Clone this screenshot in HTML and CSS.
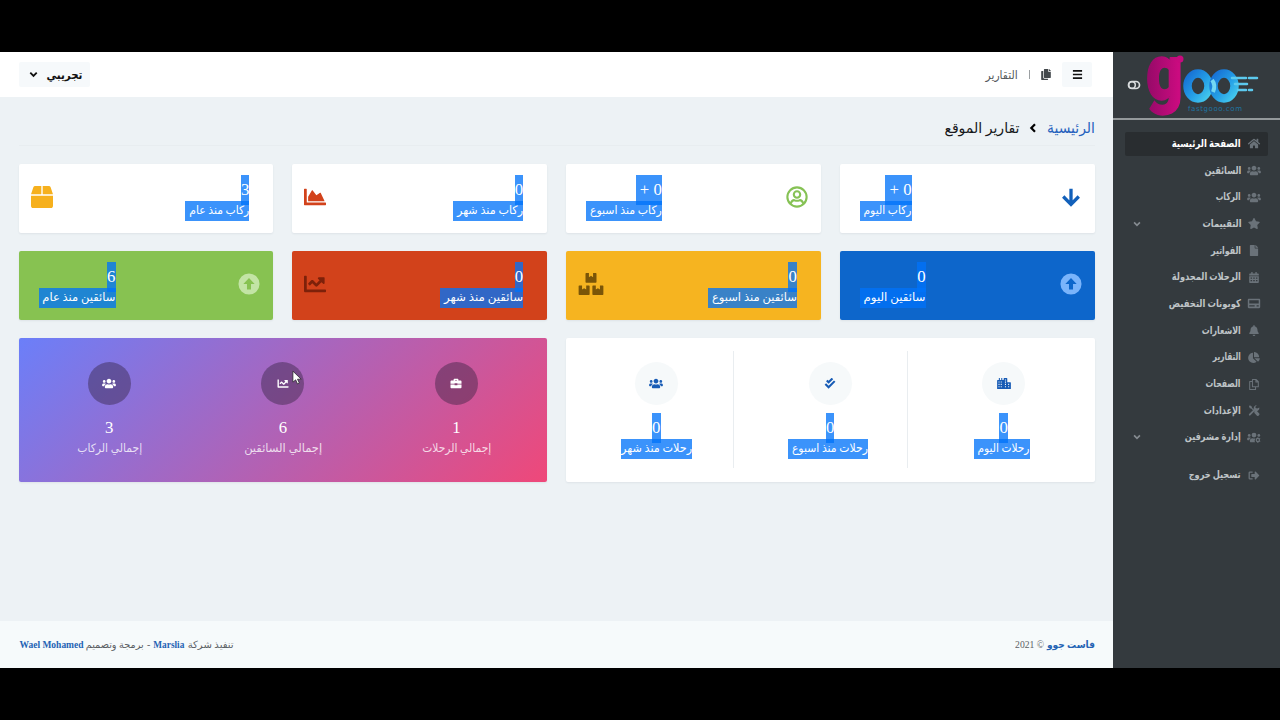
FILE: index.html
```html
<!DOCTYPE html>
<html lang="ar" dir="rtl">
<head>
<meta charset="utf-8">
<title>تقارير الموقع</title>
<link rel="stylesheet" href="styles.css">
</head>
<body>
<svg class="sprite" aria-hidden="true">
  <symbol id="users" viewBox="0 0 640 512"><path d="M96 224c35.3 0 64-28.7 64-64s-28.7-64-64-64-64 28.7-64 64 28.7 64 64 64zm448 0c35.3 0 64-28.7 64-64s-28.7-64-64-64-64 28.7-64 64 28.7 64 64 64zm32 32h-64c-17.6 0-33.5 7.1-45.1 18.6 40.3 22.1 68.9 62 75.1 109.4h66c17.7 0 32-14.3 32-32v-32c0-35.3-28.7-64-64-64zm-256 0c61.9 0 112-50.1 112-112S381.9 32 320 32 208 82.1 208 144s50.1 112 112 112zm76.8 32h-8.3c-20.8 10-43.9 16-68.5 16s-47.6-6-68.5-16h-8.3C179.6 288 128 339.6 128 403.2V432c0 26.5 21.5 48 48 48h288c26.5 0 48-21.5 48-48v-28.8c0-63.6-51.6-115.2-115.2-115.2zm-223.7-13.4C161.5 263.1 145.6 256 128 256H64c-35.3 0-64 28.7-64 64v32c0 17.7 14.3 32 32 32h65.9c6.3-47.4 34.9-87.3 75.2-109.4z"/></symbol>
  <symbol id="users-cog" viewBox="0 0 640 512"><circle cx="96" cy="160" r="64"/><circle cx="320" cy="144" r="112"/><circle cx="544" cy="160" r="64"/><path d="M173 275c-12-12-27-19-45-19H64c-35 0-64 29-64 64v32c0 18 14 32 32 32h66c6-47 35-87 75-109zM128 403c0-64 52-115 115-115h9c43 21 94 21 137 0l-20 60c-30 40-20 90 10 132H176c-27 0-48-21-48-48z"/><circle cx="500" cy="372" r="74" fill="none" stroke="currentColor" stroke-width="62"/><path d="M478 240h44v44h-44zM478 460h44v48h-44zM590 280l32 38-38 26-26-36zM590 464l32-38-38-26-26 36z"/></symbol>
  <symbol id="star" viewBox="0 0 576 512"><path d="M259.3 17.8L194 150.2 47.9 171.5c-26.2 3.8-36.7 36.1-17.7 54.6l105.7 103-25 145.5c-4.5 26.3 23.2 46 46.4 33.7L288 439.6l130.7 68.7c23.2 12.2 50.9-7.4 46.4-33.7l-25-145.5 105.7-103c19-18.5 8.5-50.8-17.7-54.6L382 150.2 316.7 17.8c-11.7-23.6-45.6-23.9-57.4 0z"/></symbol>
  <symbol id="file" viewBox="0 0 384 512"><path d="M224 136V0H24C10.7 0 0 10.7 0 24v464c0 13.3 10.7 24 24 24h336c13.3 0 24-10.7 24-24V160H248c-13.2 0-24-10.8-24-24zm160-14.1v6.1H256V0h6.1c6.4 0 12.5 2.5 17 7l97.9 98c4.5 4.5 7 10.6 7 16.9z"/></symbol>
  <symbol id="home" viewBox="0 0 576 512"><path d="M280.37 148.26L96 300.11V464a16 16 0 0 0 16 16l112.06-.29a16 16 0 0 0 15.92-16V368a16 16 0 0 1 16-16h64a16 16 0 0 1 16 16v95.64a16 16 0 0 0 16 16.05L464 480a16 16 0 0 0 16-16V300L295.67 148.26a12.19 12.19 0 0 0-15.3 0zM571.6 251.47L488 182.56V44.05a12 12 0 0 0-12-12h-56a12 12 0 0 0-12 12v72.61L318.47 43a48 48 0 0 0-61 0L4.34 251.47a12 12 0 0 0-1.6 16.9l25.5 31A12 12 0 0 0 45.15 301l235.22-193.74a12.19 12.19 0 0 1 15.3 0L530.9 301a12 12 0 0 0 16.9-1.6l25.5-31a12 12 0 0 0-1.7-16.93z"/></symbol>
  <symbol id="calendar" viewBox="0 0 448 512"><path fill-rule="evenodd" d="M0 192v272c0 27 21 48 48 48h352c27 0 48-21 48-48V192zm64 60h70v60H64zm125 0h70v60h-70zm125 0h70v60h-70zM64 376h70v60H64zm125 0h70v60h-70zm125 0h70v60h-70zM448 160v-48c0-27-21-48-48-48h-48V12c0-7-5-12-12-12h-40c-7 0-12 5-12 12v52H160V12c0-7-5-12-12-12h-40c-7 0-12 5-12 12v52H48c-27 0-48 21-48 48v48z"/></symbol>
  <symbol id="card" viewBox="0 0 576 512"><path fill-rule="evenodd" d="M48 40h480c27 0 48 21 48 48v336c0 27-21 48-48 48H48c-27 0-48-21-48-48V88c0-27 21-48 48-48zm20 70v150h440V110zm0 230v56h250v-56zm340 0v56h100v-56z"/></symbol>
  <symbol id="bell" viewBox="0 0 448 512"><path d="M224 512c35.32 0 63.97-28.65 63.97-64H160.03c0 35.35 28.65 64 63.97 64zm215.39-149.71c-19.32-20.76-55.47-51.99-55.47-154.29 0-77.7-54.48-139.9-127.94-155.16V32c0-17.67-14.32-32-31.98-32s-31.98 14.33-31.98 32v20.84C118.56 68.1 64.08 130.3 64.08 208c0 102.3-36.15 133.53-55.47 154.29-6 6.45-8.66 14.16-8.61 21.71.11 16.4 12.98 32 32.1 32h383.8c19.12 0 32-15.6 32.1-32 .05-7.55-2.61-15.27-8.61-21.71z"/></symbol>
  <symbol id="pie" viewBox="0 0 544 512"><path d="M527.79 288H290.5l158.03 158.03c6.04 6.04 15.98 6.53 22.19.68 38.7-36.46 65.32-85.61 73.13-140.86 1.34-9.46-6.51-17.85-16.06-17.85zm-15.83-64.8C503.72 103.74 408.26 8.28 288.8.04 279.68-.59 272 7.1 272 16.24V240h223.77c9.14 0 16.82-7.68 16.19-16.8zM224 288V50.71c0-9.55-8.39-17.4-17.84-16.06C86.99 51.49-4.1 155.6.14 280.37 4.5 408.51 114.83 513.59 243.03 511.98c50.4-.63 96.97-16.87 135.26-44.03 7.9-5.6 8.42-17.23 1.57-24.08L224 288z"/></symbol>
  <symbol id="pages" viewBox="0 0 448 512"><path d="M152 24h176l96 96v240H152zM312 30v104h104M152 120H24v368h272V370" fill="none" stroke="currentColor" stroke-width="48" stroke-linejoin="round"/></symbol>
  <symbol id="copy" viewBox="0 0 448 512"><path d="M320 448v40c0 13-11 24-24 24H24c-13 0-24-11-24-24V120c0-13 11-24 24-24h72v296c0 31 25 56 56 56zm0-344V0H152c-13 0-24 11-24 24v368c0 13 11 24 24 24h272c13 0 24-11 24-24V128H344c-13 0-24-11-24-24zm121-31L375 7c-5-5-11-7-17-7h-6v96h96v-6c0-6-3-12-7-17z"/></symbol>
  <symbol id="tools" viewBox="0 0 512 512"><path d="M70 70l120 120 110 110" fill="none" stroke="currentColor" stroke-width="52"/><path d="M20 60l45-45 85 55 10 60-38 38-58-14zM300 270l60-20 140 140c16 16 16 46 0 70l-35 35c-20 18-50 18-70 0L265 365z"/><path d="M60 450L330 180" fill="none" stroke="currentColor" stroke-width="86" stroke-linecap="round"/><path d="M502 120c14 60-16 130-86 156-36 12-80 10-112-8l-66-62c-12-90 40-200 150-204l-66 76 10 70 70 12z"/></symbol>
  <symbol id="logout" viewBox="0 0 512 512"><path d="M497 273L329 441c-15 15-41 4.500-41-17v-96H152c-13 0-24-11-24-24v-96c0-13 11-24 24-24h136V88c0-21 26-32 41-17l168 168c9 9 9 25 0 34z"/><path d="M192 96H64c-18 0-32 14-32 32v256c0 18 14 32 32 32h128" fill="none" stroke="currentColor" stroke-width="60"/></symbol>
  <symbol id="chevron" viewBox="0 0 12 12"><path d="M2.500 4L6 7.500 9.500 4" fill="none" stroke="currentColor" stroke-width="2"/></symbol>
  <symbol id="chevron-left" viewBox="0 0 12 12"><path d="M8 2.200L4.300 6 8 9.800" fill="none" stroke="currentColor" stroke-width="2.200"/></symbol>
  <symbol id="bars" viewBox="0 0 12 12"><path d="M1 2h10M1 6h10M1 10h10" fill="none" stroke="currentColor" stroke-width="1.800"/></symbol>
  <symbol id="toggle" viewBox="0 0 14 10"><rect x="1.500" y="1.500" width="11" height="7" rx="3.500" fill="none" stroke="currentColor" stroke-width="1.700"/><circle cx="5" cy="5" r="3.300" fill="none" stroke="currentColor" stroke-width="1.500"/></symbol>
  <symbol id="arrow-down" viewBox="0 0 24 24"><path d="M12 3v16M3.500 11.500l8.500 8.500 8.500-8.500" fill="none" stroke="currentColor" stroke-width="3.600"/></symbol>
  <symbol id="user-circle" viewBox="0 0 24 24"><g fill="none" stroke="currentColor" stroke-width="2.300"><circle cx="12" cy="12" r="10.500"/><circle cx="12" cy="9.300" r="3.500"/><path d="M5 19.200c1.500-3.500 3.500-4 4.800-3.500 1.400.5 3 .5 4.400 0 1.300-.5 3.300 0 4.800 3.500"/></g></symbol>
  <symbol id="area" viewBox="0 0 512 512"><path d="M500 384c6.600 0 12 5.400 12 12v40c0 6.600-5.400 12-12 12H12c-6.600 0-12-5.400-12-12V76c0-6.600 5.400-12 12-12h40c6.600 0 12 5.400 12 12v308h436zM372.700 159.500L288 216l-85.300-113.700c-5.100-6.800-15.500-6.300-19.900 1L96 248v104h384l-89.900-187.800c-3.200-6.500-11.400-8.700-17.400-4.700z"/></symbol>
  <symbol id="line" viewBox="0 0 512 512"><path d="M496 384H64V80c0-8.840-7.160-16-16-16H16C7.160 64 0 71.160 0 80v336c0 17.670 14.330 32 32 32h464c8.840 0 16-7.160 16-16v-32c0-8.840-7.160-16-16-16zM464 96H345.940c-21.380 0-32.090 25.850-16.970 40.970l32.400 32.400L288 242.750l-73.370-73.370c-12.500-12.500-32.760-12.500-45.250 0l-68.690 68.690c-6.250 6.250-6.250 16.380 0 22.630l22.620 22.620c6.250 6.250 16.380 6.250 22.630 0L192 237.250l73.370 73.370c12.500 12.500 32.760 12.500 45.250 0l96-96 32.400 32.400c15.120 15.120 40.970 4.410 40.970-16.970V112c.010-8.840-7.150-16-15.990-16z"/></symbol>
  <symbol id="box" viewBox="0 0 512 512"><path d="M509.500 184.600L458.900 32.800C452.400 13.200 434.100 0 413.400 0H272v192h238.700c-.4-2.500-.4-5-1.200-7.400zM240 0H98.600c-20.700 0-39 13.200-45.500 32.800L2.500 184.600c-.8 2.400-.8 4.900-1.200 7.400H240V0zM0 224v240c0 26.500 21.500 48 48 48h416c26.500 0 48-21.500 48-48V224H0z"/></symbol>
  <symbol id="boxes" viewBox="0 0 576 512"><path id="crate" d="M160 16c0-9 7-16 16-16h64v96l48-32 48 32V0h64c9 0 16 7 16 16v192c0 9-7 16-16 16H176c-9 0-16-7-16-16z"/><use href="#crate" transform="translate(-160 288)"/><use href="#crate" transform="translate(160 288)"/></symbol>
  <symbol id="arrow-circle" viewBox="0 0 24 24"><path fill-rule="evenodd" d="M12 .5a11.500 11.500 0 1 1 0 23 11.500 11.500 0 0 1 0-23zm0 5L5.800 12H9.800v6h4.400v-6h4z"/></symbol>
  <symbol id="briefcase" viewBox="0 0 512 512"><path fill-rule="evenodd" d="M144 112V80c0-27 21-48 48-48h128c27 0 48 21 48 48v32h96c27 0 48 21 48 48v112H320v-24H192v24H0V160c0-27 21-48 48-48zm64-16v16h96V96zM0 304h192v30h128v-30h192v128c0 27-21 48-48 48H48c-27 0-48-21-48-48z"/></symbol>
  <symbol id="checks" viewBox="0 0 512 512"><path d="M105 115l85 85L370 20M40 280l150 150L475 145" fill="none" stroke="currentColor" stroke-width="96"/></symbol>
  <symbol id="city" viewBox="0 0 640 512"><path fill-rule="evenodd" d="M80 0h48v96h64V0h48v96h64V24c0-13 11-24 24-24h120c13 0 24 11 24 24v168h144c13 0 24 11 24 24v296H0V120c0-13 11-24 24-24h56zM64 160v48h48v-48zm104 0v48h48v-48zM64 272v48h48v-48zm104 0v48h48v-48zM64 384v48h48v-48zm104 0v48h48v-48zM364 64v48h48V64zm0 104v48h48v-48zm0 104v48h48v-48zm0 112v48h48v-48zm148-112v48h48v-48zm0 112v48h48v-48z"/></symbol>
  <linearGradient id="pink" x1="0" x2="1"><stop offset="0" stop-color="#940a67"/><stop offset="1" stop-color="#d20b83"/></linearGradient>
  <linearGradient id="sky" x1="0" y1="0" x2="1" y2="1"><stop offset="0" stop-color="#176fd4"/><stop offset=".55" stop-color="#249ee6"/><stop offset="1" stop-color="#46cbed"/></linearGradient>
</svg>

<div class="app">
  <aside class="sidebar">
    <div class="brand" dir="ltr">
      <svg class="toggle"><use href="#toggle"/></svg>
      <svg class="logo" viewBox="0 0 114 64">
        <text class="logo-g" x="-1" y="46" textLength="37" lengthAdjust="spacingAndGlyphs">g</text>
        <circle cx="33" cy="6" r="3.500" fill="#c70b7e"/>
        <ellipse cx="51" cy="33" rx="10.500" ry="12.500" fill="none" stroke="url(#sky)" stroke-width="8.500"/>
        <ellipse cx="77" cy="33" rx="10.500" ry="12.500" fill="none" stroke="url(#sky)" stroke-width="8.500"/>
        <path d="M65 27q4 5 1 12" fill="none" stroke="#73d7f3" stroke-width="4"/>
        <path d="M85 25h14M102 25h8M88 31h12M91 37h8M102 37h3" stroke="#5cc9ee" stroke-width="2.500" stroke-linecap="round"/>
        <text class="logo-url" x="41" y="58" textLength="54">fastgooo.com</text>
      </svg>
    </div>
    <nav class="menu">
      <a class="item active"><svg><use href="#home"/></svg><span data-w="69">الصفحة الرئيسية</span></a>
      <a class="item"><svg><use href="#users"/></svg><span data-w="37">السائقين</span></a>
      <a class="item"><svg><use href="#users"/></svg><span data-w="25">الركاب</span></a>
      <a class="item"><svg><use href="#star"/></svg><span data-w="39">التقييمات</span><svg class="caret"><use href="#chevron"/></svg></a>
      <a class="item"><svg><use href="#file"/></svg><span data-w="30">الفواتير</span></a>
      <a class="item"><svg><use href="#calendar"/></svg><span data-w="69">الرحلات المجدولة</span></a>
      <a class="item"><svg><use href="#card"/></svg><span data-w="72">كوبونات التخفيض</span></a>
      <a class="item"><svg><use href="#bell"/></svg><span data-w="39">الاشعارات</span></a>
      <a class="item"><svg><use href="#pie"/></svg><span data-w="28">التقارير</span></a>
      <a class="item"><svg><use href="#pages"/></svg><span data-w="35">الصفحات</span></a>
      <a class="item"><svg><use href="#tools"/></svg><span data-w="37">الإعدادات</span></a>
      <a class="item"><svg><use href="#users-cog"/></svg><span data-w="56">إدارة مشرفين</span><svg class="caret"><use href="#chevron"/></svg></a>
      <a class="item logout"><svg><use href="#logout"/></svg><span data-w="52">تسجيل خروج</span></a>
    </nav>
  </aside>

  <main class="main">
    <header class="topbar">
      <div class="tools">
        <button class="btn square"><svg><use href="#bars"/></svg></button>
        <svg class="copy"><use href="#copy"/></svg>
        <i class="sep"></i>
        <span data-w="32">التقارير</span>
      </div>
      <button class="btn user"><span data-w="36">تجريبي</span><svg><use href="#chevron"/></svg></button>
    </header>

    <div class="content">
      <div class="crumbs">
        <a data-w="48">الرئيسية</a>
        <svg><use href="#chevron-left"/></svg>
        <span data-w="75">تقارير الموقع</span>
      </div>

      <section class="cards">
        <article class="card icon-first"><svg class="blue-ink"><use href="#arrow-down"/></svg><div class="stat sel"><b>0 +&nbsp;</b><p><span data-w="48">ركاب اليوم</span></p></div></article>
        <article class="card icon-first"><svg class="green-ink"><use href="#user-circle"/></svg><div class="stat sel"><b>0 +&nbsp;</b><p><span data-w="72">ركاب منذ اسبوع</span></p></div></article>
        <article class="card"><div class="stat sel"><b>0</b><p><span data-w="66">ركاب منذ شهر</span></p></div><svg class="red-ink"><use href="#area"/></svg></article>
        <article class="card"><div class="stat sel"><b>3</b><p><span data-w="60">ركاب منذ عام</span></p></div><svg class="amber-ink"><use href="#box"/></svg></article>

        <article class="card icon-first blue"><svg><use href="#arrow-circle"/></svg><div class="stat sel"><b>0</b><p><span data-w="62">سائقين اليوم</span></p></div></article>
        <article class="card amber"><div class="stat sel"><b>0</b><p><span data-w="85">سائقين منذ اسبوع</span></p></div><svg class="wide"><use href="#boxes"/></svg></article>
        <article class="card red"><div class="stat sel"><b>0</b><p><span data-w="79">سائقين منذ شهر</span></p></div><svg><use href="#line"/></svg></article>
        <article class="card icon-first green"><svg><use href="#arrow-circle"/></svg><div class="stat sel"><b>6</b><p><span data-w="73">سائقين منذ عام</span></p></div></article>

        <article class="panel trips">
          <div class="col"><i class="disc"><svg><use href="#city"/></svg></i><div class="stat sel"><b>0</b><p class="trail"><span data-w="52">رحلات اليوم</span></p></div></div>
          <div class="col"><i class="disc"><svg><use href="#checks"/></svg></i><div class="stat sel"><b>0</b><p class="trail"><span data-w="76">رحلات منذ اسبوع</span></p></div></div>
          <div class="col"><i class="disc"><svg><use href="#users"/></svg></i><div class="stat sel"><b>0</b><p class="flush"><span data-w="71">رحلات منذ شهر</span></p></div></div>
        </article>
        <article class="panel totals">
          <div class="col"><i class="disc"><svg><use href="#briefcase"/></svg></i><div class="stat"><b>1</b><p><span data-w="69">إجمالي الرحلات</span></p></div></div>
          <div class="col"><i class="disc"><svg><use href="#line"/></svg></i><div class="stat"><b>6</b><p><span data-w="78">إجمالي السائقين</span></p></div></div>
          <div class="col"><i class="disc"><svg><use href="#users"/></svg></i><div class="stat"><b>3</b><p><span data-w="65">إجمالي الركاب</span></p></div></div>
          <svg class="pointer" viewBox="0 0 12 17"><path d="M1 1v12l3-2.500 2 4.500 2-1-2-4.200h4z" fill="#fff" stroke="#222" stroke-width=".8"/></svg>
        </article>
      </section>
    </div>

    <footer class="footer">
      <div class="credit"><a data-w="48">فاست جوو</a><span data-w="29">© 2021</span></div>
      <div class="credit"><span data-w="46">تنفيذ شركة</span><a data-w="31">Marslia</a><span>-</span><span data-w="58">برمجة وتصميم</span><a data-w="64">Wael Mohamed</a></div>
    </footer>
  </main>
</div>
<script src="fit.js"></script>
</body>
</html>
```
FILE: styles.css
```css
* { box-sizing: border-box; }
body {
  margin: 0;
  height: 720px;
  padding: 52px 0;
  overflow: hidden;
  background: #000;
  font-family: "Liberation Serif", "DejaVu Sans", sans-serif;
  font-size: 11.5px;
  color: #16181a;
}
svg { display: block; fill: currentColor; flex: none; overflow: visible; }
.sprite { position: absolute; width: 0; height: 0; }
p { margin: 0; }
i { display: block; }
[data-w] { display: inline-block; white-space: nowrap; flex: none; }
.fit-inner { display: inline-block; transform-origin: right center; }

.app { display: flex; height: 616px; background: #edf2f5; }

.sidebar { width: 167px; background: #343a3e; color: #bfc4c7; flex: none; }
.brand {
  display: flex;
  align-items: center;
  gap: 6px;
  height: 68px;
  padding-left: 14px;
  border-bottom: 2px solid #94999b;
}
.toggle { width: 14px; height: 10px; color: #d9dcde; }
.logo { width: 114px; height: 64px; }
.logo-g { font: 900 77px Roboto, sans-serif; fill: url(#pink); stroke: url(#pink); stroke-width: 1.500px; }
.logo-url { font: 7px "DejaVu Sans", sans-serif; fill: #1f75a2; }
.menu { padding: 12px 12px 0; }
.item {
  display: flex;
  align-items: center;
  gap: 6px;
  height: 23.700px;
  margin-bottom: 3px;
  padding: 0 7px;
  border-radius: 2px;
  font-size: 10.500px;
  font-weight: 700;
  line-height: 20px;
}
.item svg { width: 14px; height: 11px; color: #6a7279; }
.item svg.caret { width: 10px; height: 10px; margin-right: auto; color: #858b90; }
.item.active { background: #292d30; color: #fff; }
.item.logout { margin-top: 14px; }

.main { display: flex; flex-direction: column; flex: 1; min-width: 0; }
.topbar {
  display: flex;
  align-items: center;
  justify-content: space-between;
  height: 45px;
  padding: 0 21px 0 19px;
  background: #fff;
  color: #55595c;
}
.tools { display: flex; align-items: center; }
.tools .copy { width: 10px; height: 11px; margin: 0 11px 0 11px; color: #43484c; }
.sep { width: 1px; height: 9px; margin-left: 11px; background: #9b9fa2; }
.btn {
  display: flex;
  align-items: center;
  height: 25px;
  border: 0;
  border-radius: 2px;
  background: #f6f9fb;
  color: #111;
  font: 700 11.500px "Liberation Serif", "DejaVu Sans", sans-serif;
}
.square { justify-content: center; width: 30px; padding: 0; }
.square svg { width: 11px; height: 11px; }
.user { width: 71px; padding: 0 8px; gap: 7px; }
.user svg { width: 11px; height: 11px; }

.content { flex: 1; padding: 13px 18.500px 0 18.500px; }
.crumbs {
  display: flex;
  align-items: center;
  height: 36px;
  border-bottom: 1px solid #e8edf0;
  font-size: 14.500px;
  line-height: 24px;
}
.crumbs a { color: #2561bd; }
.crumbs svg { width: 12px; height: 12px; margin: 0 8px 0 7px; color: #000; }

.cards {
  display: grid;
  grid-template-columns: repeat(4, 1fr);
  grid-template-rows: 69px 69px 144px;
  gap: 18.200px 18.700px;
  margin-top: 17.800px;
}
.card {
  display: flex;
  justify-content: space-between;
  align-items: flex-start;
  padding: 11px 24px 0 12px;
  border-radius: 2px;
  background: #fff;
  box-shadow: 0 1px 2px rgba(40, 60, 80, .08);
}
.card.icon-first { padding: 11px 13px 0 20px; }
.card > svg { width: 22px; height: 22px; margin-top: 11.500px; }
.card > svg.wide { width: 26px; }
.blue { background: #0d66cb; }
.amber { background: #f6b420; }
.red { background: #d2421b; }
.green { background: #87c251; }
.blue > svg { color: #7ab4fb; }
.amber > svg { color: #7a5508; }
.red > svg { color: #7d210a; }
.green > svg { color: #c3e4a5; }
.card .blue-ink { color: #1260ba; }
.card .green-ink { color: #86c255; }
.card .red-ink { color: #d2421b; }
.card .amber-ink { color: #f6b01d; }

.stat { display: flex; flex-direction: column; align-items: flex-start; color: #fff; }
.stat b {
  height: 30px;
  margin-bottom: -4px;
  font-size: 16.800px;
  font-weight: 400;
  line-height: 30px;
}
.stat p { display: flex; height: 20px; padding-left: 4px; line-height: 19px; }
.sel b, .sel p { background: rgba(0, 114, 250, .77); }

.panel {
  grid-column: span 2;
  display: flex;
  border-radius: 2px;
  position: relative;
  box-shadow: 0 1px 2px rgba(40, 60, 80, .08);
}
.col { display: flex; flex-direction: column; align-items: center; }
.col .stat { align-items: center; margin-top: 7.500px; }
.disc {
  display: grid;
  place-items: center;
  width: 43px;
  height: 43px;
  border-radius: 50%;
}
.disc svg { width: 14px; height: 11px; }
.trips { background: #fff; padding: 13px 0 14px; }
.trips .col { width: 174px; padding: 11px 0 0 20px; border-left: 1px solid #e9edf0; }
.trips .col:first-child { width: 188px; padding-left: 5px; }
.trips .col:last-child { width: 167px; padding-left: 14px; border: 0; }
.trips .disc { background: #f6f9fa; color: #175bb5; }
.stat .trail { margin-right: 4px; }
.stat .flush { padding: 0; }
.totals { background: linear-gradient(135deg, #6b7ff9, #ef4879); padding: 24px 4px 0; }
.totals .col { flex: 1; }
.totals .disc { background: rgba(48, 32, 60, .42); color: #fff; }
.totals .stat p { padding: 0; color: rgba(255, 255, 255, .78); }
.pointer { position: absolute; left: 273px; top: 32px; width: 11px; height: 16px; }

.footer {
  display: flex;
  justify-content: space-between;
  align-items: center;
  height: 47px;
  padding: 0 18px 0 19px;
  background: #f6fafb;
  color: #5b6064;
  font-size: 10px;
  line-height: 20px;
}
.credit { display: flex; gap: 3px; }
.credit a { color: #2463b4; font-weight: 700; }
```
FILE: fit.js
```js
document.querySelectorAll('[data-w]').forEach(function (el) {
  var inner = document.createElement('span');
  inner.className = 'fit-inner';
  while (el.firstChild) inner.appendChild(el.firstChild);
  el.appendChild(inner);
  var natural = inner.getBoundingClientRect().width;
  var target = Number(el.dataset.w);
  el.style.width = target + 'px';
  inner.style.transform = 'scaleX(' + target / natural + ')';
  // Wider-than-slot text overflows to the left, so the right edge stays anchored.
});
```
